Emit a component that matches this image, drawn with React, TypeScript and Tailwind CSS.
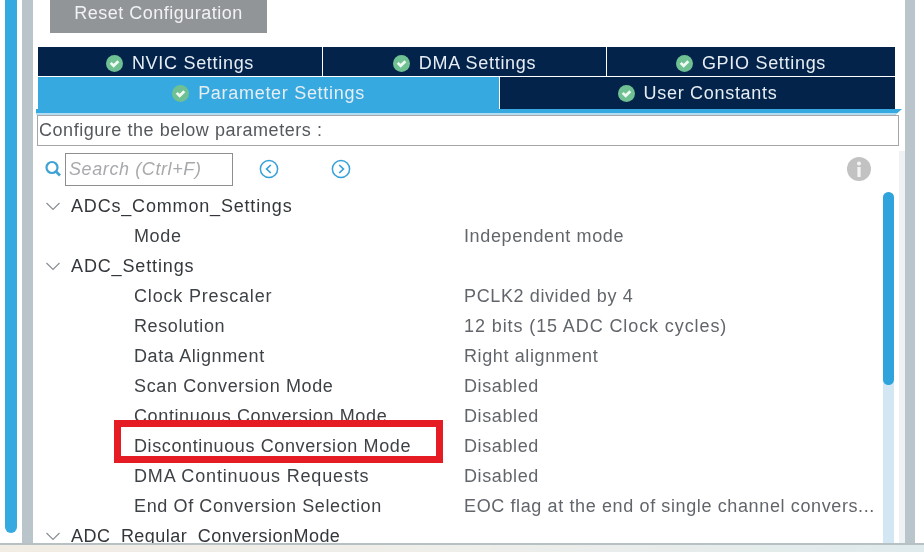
import React from "react";

const Check = ({ size = 17 }: { size?: number }) => (
  <svg width={size} height={size} viewBox="0 0 16 16" className="shrink-0">
    <circle cx="8" cy="8" r="8" fill="#6fc092" />
    <path d="M4.4 7.4 7.2 10.2 11.6 5.8" fill="none" stroke="#eefaf2" strokeWidth="2.6" />
  </svg>
);

const Chevron = () => (
  <svg width="16" height="16" viewBox="0 0 16 16" className="shrink-0">
    <path d="M1.5 5 8 11.5 14.5 5" fill="none" stroke="#8a8f94" strokeWidth="1.2" />
  </svg>
);

const Tab = ({ label, className }: { label: string; className: string }) => (
  <div className={"flex items-center justify-center gap-[9px] text-[#e6edf3] text-[18px] tracking-[0.7px] " + className}>
    <Check />
    <span>{label}</span>
  </div>
);

const Head = ({ label, track = "" }: { label: string; track?: string }) => (
  <div className="flex h-[30px] items-center pl-[12px] text-[#33373b]">
    <Chevron />
    <span className={"ml-[10px] " + track}>{label}</span>
  </div>
);

const Row = ({ name, value, nameTrack = "", valueTrack = "" }: { name: string; value: string; nameTrack?: string; valueTrack?: string }) => (
  <div className="flex h-[30px] items-center pl-[101px]">
    <span className={"w-[330px] shrink-0 text-[#3e4246] " + nameTrack}>{name}</span>
    <span className={"whitespace-nowrap text-[#62666b] " + valueTrack}>{value}</span>
  </div>
);

export default function App() {
  return (
    <div className="relative flex h-[552px] w-[924px] flex-col overflow-hidden bg-white font-['Liberation_Sans',Arial,sans-serif] blur-[0.4px]">
      <div className="flex h-[543px] shrink-0">
        <div className="ml-[5px] h-[533px] w-[12px] rounded-b-md bg-[#36a9e0]" />
        <div className="ml-[5px] w-[11px] bg-[#b9c4cb]" />
        <div className="flex w-[872px] flex-col overflow-hidden bg-white">
          <div className="flex h-[47px] shrink-0 items-start pl-[17px]">
            <div className="flex h-[33px] w-[217px] items-center justify-center bg-[#929598] pb-[6px] text-[18px] tracking-[0.5px] text-[#f1f2f3]">
              Reset Configuration
            </div>
          </div>
          <div className="ml-[5px] w-[857px] shrink-0">
            <div className="flex h-[29px] gap-px bg-white">
              <Tab label="NVIC Settings" className="w-[284px] bg-[#03234b] pt-[3px]" />
              <Tab label="DMA Settings" className="w-[283px] bg-[#03234b] pt-[3px]" />
              <Tab label="GPIO Settings" className="flex-1 bg-[#03234b] pt-[3px]" />
            </div>
            <div className="mt-px flex h-[32px] gap-px bg-white">
              <Tab label="Parameter Settings" className="w-[461px] bg-[#36a9e0]" />
              <Tab label="User Constants" className="flex-1 bg-[#03234b]" />
            </div>
            <div className="ml-[-2px] h-[6px] w-[866px] border-b-[2px] border-[#b5dcf1] bg-[#36a9e0] [clip-path:polygon(0_0,100%_0,99.2%_100%,0_100%)]" />
          </div>
          <div className="ml-[4px] flex h-[31px] w-[862px] shrink-0 items-center border border-[#a4a6a8] pl-px text-[18px] tracking-[0.54px] text-[#55595d]">
            Configure the below parameters :
          </div>
          <div className="flex min-h-0 flex-1 text-[18px] tracking-[0.62px]">
            <div className="min-w-0 flex-1">
              <div className="flex h-[45px] items-start pl-[12px] pt-[7px]">
                <svg width="20" height="32" viewBox="0 0 20 32" className="shrink-0">
                  <circle cx="7" cy="14.5" r="5.5" fill="none" stroke="#3fa3d6" strokeWidth="2.2" />
                  <path d="M11 18.5 15 22.5" stroke="#3fa3d6" strokeWidth="2.6" />
                </svg>
                <div className="flex h-[33px] w-[168px] shrink-0 items-center border border-[#8c8e90] pl-[3px] italic tracking-[0.6px] text-[#a7a9ac]">
                  Search (Ctrl+F)
                </div>
                <svg width="20" height="20" viewBox="0 0 20 20" className="ml-[26px] mt-[6px] shrink-0">
                  <circle cx="10" cy="10" r="8.6" fill="none" stroke="#36a0d8" strokeWidth="1.5" />
                  <path d="M11.8 6 7.6 10 11.8 14" fill="none" stroke="#36a0d8" strokeWidth="1.7" />
                </svg>
                <svg width="20" height="20" viewBox="0 0 20 20" className="ml-[52px] mt-[6px] shrink-0">
                  <circle cx="10" cy="10" r="8.6" fill="none" stroke="#36a0d8" strokeWidth="1.5" />
                  <path d="M8.2 6 12.4 10 8.2 14" fill="none" stroke="#36a0d8" strokeWidth="1.7" />
                </svg>
                <svg width="24" height="24" viewBox="0 0 24 24" className="ml-auto mr-[6px] mt-[4px] shrink-0">
                  <circle cx="12" cy="12" r="12" fill="#c2c2c2" />
                  <circle cx="12" cy="6.5" r="2" fill="#f4f4f4" />
                  <rect x="10.4" y="10" width="3.2" height="10" fill="#f4f4f4" />
                </svg>
              </div>
              <div className="overflow-hidden">
                <Head label="ADCs_Common_Settings" track="tracking-[0.82px]" />
                <Row name="Mode" value="Independent mode" />
                <Head label="ADC_Settings" track="tracking-[0.87px]" />
                <Row name="Clock Prescaler" nameTrack="tracking-[0.82px]" value="PCLK2 divided by 4" />
                <Row name="Resolution" value="12 bits (15 ADC Clock cycles)" valueTrack="tracking-[0.9px]" />
                <Row name="Data Alignment" value="Right alignment" />
                <Row name="Scan Conversion Mode" value="Disabled" />
                <Row name="Continuous Conversion Mode" value="Disabled" />
                <Row name="Discontinuous Conversion Mode" value="Disabled" />
                <Row name="DMA Continuous Requests" nameTrack="tracking-[0.84px]" value="Disabled" />
                <Row name="End Of Conversion Selection" value="EOC flag at the end of single channel convers..." />
                <Head label="ADC_Regular_ConversionMode" track="tracking-[0.47px]" />
              </div>
            </div>
            <div className="ml-[6px] mr-[5px] mt-[46px] w-[11px] shrink-0 rounded-t-full bg-[#d3e6f4]">
              <div className="h-[193px] rounded-full bg-[#2fa3dc]" />
            </div>
            <div className="mt-[5px] w-[6px] shrink-0 bg-[#eff2f4]" />
          </div>
        </div>
        <div className="w-[10px] bg-[#b9c4cb]" />
      </div>
      <div className="h-[2px] shrink-0 bg-[#b7c1c4]" />
      <div className="flex-1 bg-gradient-to-r from-[#f1ece4] via-[#eeeeea] to-[#dfeaec]" />
      <div className="absolute left-[114px] top-[420px] h-[43px] w-[329px] border-[7px] border-[#e51c23]" />
    </div>
  );
}
